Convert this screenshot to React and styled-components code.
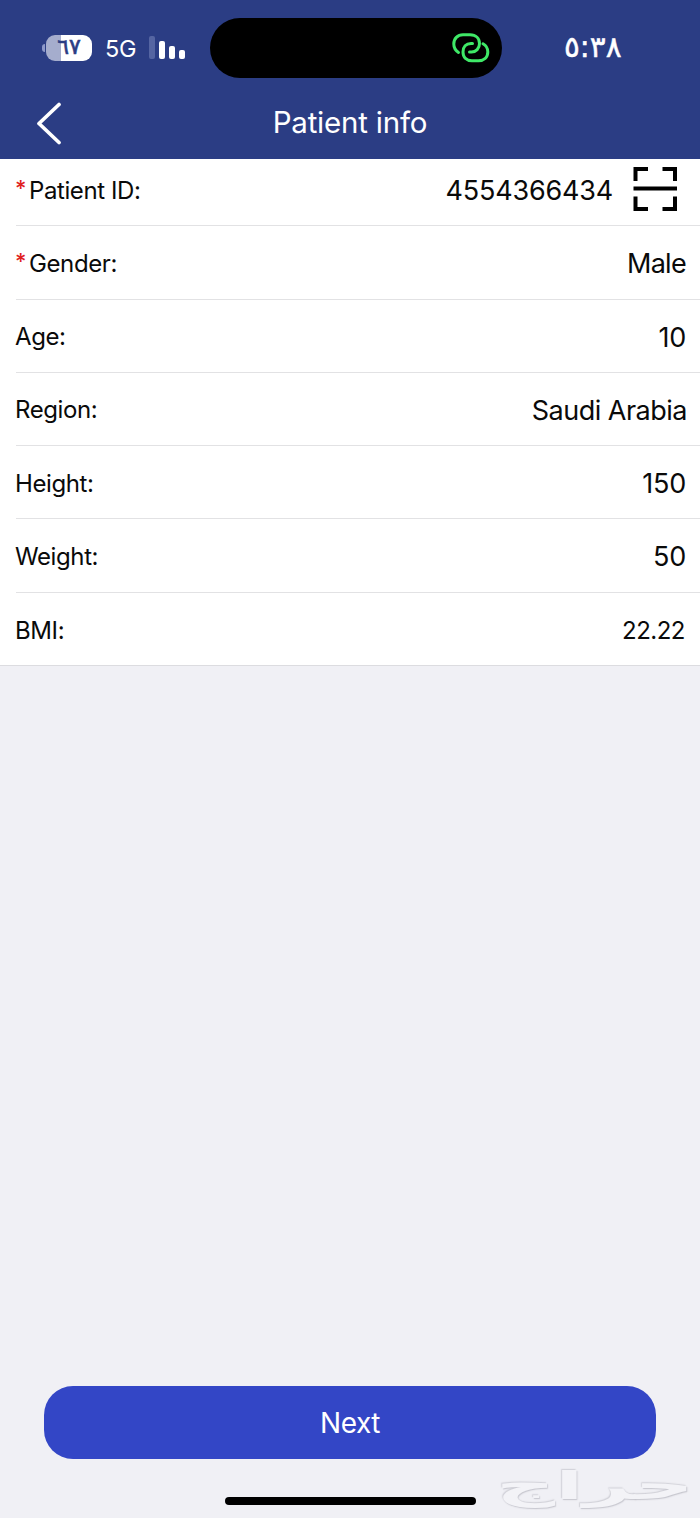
import React from "react";
import styled, { createGlobalStyle } from "styled-components";

const GlobalStyle = createGlobalStyle`
  body {
    margin: 0;
    background-color: #f0f0f5;
    font-family: Inter, "DejaVu Sans", sans-serif;
  }
`;

const Screen = styled.div`
  position: relative;
  display: flex;
  flex-direction: column;
  width: 700px;
  height: 1518px;
  overflow: hidden;
  background-color: #f0f0f5;
`;

const Header = styled.header`
  flex: none;
  z-index: 1;
  height: 159px;
  color: #fff;
  background-color: #2b3d84;
`;

const StatusBar = styled.div`
  display: grid;
  grid-template-columns: 210px 292px 1fr;
  align-items: center;
  height: 60px;
  padding-top: 18px;
`;

const Signals = styled.div`
  display: flex;
  align-items: center;
  height: 28px;
  padding-left: 42px;
`;

const BatteryCap = styled.span`
  width: 3px;
  height: 8px;
  margin-right: 1px;
  border-radius: 3px 0 0 3px;
  background-color: #8d98c9;
`;

const Battery = styled.span`
  display: flex;
  align-items: center;
  justify-content: center;
  width: 46px;
  height: 26px;
  padding-bottom: 3px;
  box-sizing: border-box;
  border-radius: 9px;
  color: #2b3d84;
  background: linear-gradient(to right, #a5adcd 33%, #fff 33%);
  font: 22px "DejaVu Sans", sans-serif;
  -webkit-text-stroke: 0.6px #2b3d84;
  letter-spacing: -1px;
  direction: ltr;
  unicode-bidi: bidi-override;
`;

const Network = styled.span`
  width: 44px;
  margin: 1px 0 0 13px;
  font-size: 23.5px;
  letter-spacing: -0.2px;
`;

const Bars = styled.span`
  display: flex;
  align-items: flex-end;
  gap: 4px;
  height: 23px;
  margin-bottom: 1px;
`;

const Bar = styled.i`
  width: 6px;
  height: ${(props) => props.$height}px;
  border-radius: 2px;
  background-color: ${(props) => (props.$dim ? "#5565a2" : "#fff")};
`;

const Island = styled.div`
  display: flex;
  align-items: center;
  justify-content: flex-end;
  height: 60px;
  padding-right: 12px;
  box-sizing: border-box;
  border-radius: 30px;
  background-color: #000;
`;

const Clock = styled.div`
  padding: 0 0 3px 62px;
  font: 29.5px "DejaVu Sans", sans-serif;
  -webkit-text-stroke: 0.5px #fff;
  letter-spacing: -0.2px;
  direction: ltr;
  unicode-bidi: bidi-override;
`;

const NavBar = styled.nav`
  display: grid;
  grid-template-columns: 100px 1fr 100px;
  align-items: center;
  height: 90px;
`;

const BackButton = styled.button`
  display: flex;
  padding: 0 0 0 36px;
  border: 0;
  background: none;
`;

const Title = styled.h1`
  margin: 0 0 2px;
  text-align: center;
  font-size: 29.5px;
  font-weight: 400;
  letter-spacing: -0.2px;
`;

// The list is scrolled slightly under the header
const List = styled.main`
  flex: none;
  height: 512px;
  margin-top: -6px;
  border-bottom: 1px solid #dcdce0;
  background-color: #fff;
`;

const Row = styled.div`
  display: flex;
  align-items: center;
  height: 73.25px;
  margin-left: 16px;
  padding: 2px ${(props) => props.$right || 14}px 0 0;
  box-sizing: border-box;
  border-bottom: 1px solid #e2e2e4;
  color: #0a0a0a;

  &:last-child {
    border-bottom: 0;
  }
`;

const Required = styled.span`
  width: 14px;
  margin: 0 0 4px -1px;
  color: #e02020;
  font-size: 22px;
  font-weight: 500;

  & + span {
    margin-left: 0;
  }
`;

const Label = styled.span`
  flex: 1;
  margin-left: -1px;
  font-size: 24px;
  letter-spacing: -0.4px;
`;

const Value = styled.span`
  padding-top: 1px;
  font-size: ${(props) => props.$size || 27}px;
  letter-spacing: ${(props) => props.$spacing || -0.2}px;
`;

const ScanButton = styled.button`
  display: flex;
  margin: 0 0 2px 20px;
  padding: 0;
  border: 0;
  background: none;
`;

const Footer = styled.footer`
  display: flex;
  flex-direction: column;
  align-items: center;
  margin-top: auto;
  padding-bottom: 13px;
`;

const NextButton = styled.button`
  width: 612px;
  height: 73px;
  margin-bottom: 38px;
  padding-top: 2px;
  border: 0;
  border-radius: 29px;
  color: #fff;
  background-color: #3346c6;
  font-family: inherit;
  font-size: 28px;
  letter-spacing: -0.5px;
`;

const HomeIndicator = styled.div`
  width: 251px;
  height: 8px;
  border-radius: 4px;
  background-color: #000;
`;

const Watermark = styled.div`
  position: absolute;
  right: 6px;
  bottom: 13px;
  color: #f3f3f7;
  font: bold 44px/44px "DejaVu Sans", sans-serif;
  direction: rtl;
  transform: scale(1.87, 0.87);
  transform-origin: right bottom;
  text-shadow: 0.5px 1px 1px #c4c4cc, -0.5px -1px 1px #d0d0d7;
`;

function LinkIcon() {
  return (
    <svg width="38" height="30" viewBox="0 0 38 30" fill="none" stroke="#3fe867" strokeWidth="3" strokeLinecap="round">
      <path d="M6.5 19.5C3.5 17.5 1.8 14.5 1.8 11C1.8 5.5 5.5 1.8 11 1.8H18C24 1.8 27.5 5.5 27.5 10.5C27.5 15.5 24 19 19.5 19H17.5" />
      <path d="M20.5 10.5H19C14 10.5 11 14 11 19C11 24.5 14.5 27.8 20 27.8H26.5C32 27.8 35.8 24.5 35.8 19C35.8 15.5 34 12.5 31 10.8" />
    </svg>
  );
}

function ScanIcon() {
  return (
    <svg width="45" height="44" viewBox="0 0 45 44" fill="none" stroke="#000" strokeWidth="4">
      <path d="M2.5 14V2H15M29.5 2H42V14M2.5 29.5V42H15M29.5 42H42V29.5M.5 21.5H44" />
    </svg>
  );
}

function BackIcon() {
  return (
    <svg width="26" height="44" viewBox="0 0 26 44" fill="none" stroke="#fff" strokeWidth="3.7" strokeLinecap="round" strokeLinejoin="round">
      <path d="M23 3.5L3 22.5L23 41.5" />
    </svg>
  );
}

function Field(props) {
  return (
    <Row $right={props.right}>
      {props.required && <Required>*</Required>}
      <Label>{props.label}</Label>
      <Value $size={props.size} $spacing={props.spacing}>
        {props.value}
      </Value>
      {props.children}
    </Row>
  );
}

function App() {
  return (
    <React.Fragment>
      <GlobalStyle />
      <Screen>
        <Header>
          <StatusBar>
            <Signals>
              <BatteryCap />
              <Battery>٦٧</Battery>
              <Network>5G</Network>
              <Bars>
                <Bar $height={23} $dim />
                <Bar $height={18} />
                <Bar $height={13} />
                <Bar $height={9} />
              </Bars>
            </Signals>
            <Island>
              <LinkIcon />
            </Island>
            <Clock>٥:٣٨</Clock>
          </StatusBar>
          <NavBar>
            <BackButton aria-label="Back">
              <BackIcon />
            </BackButton>
            <Title>Patient info</Title>
          </NavBar>
        </Header>

        <List>
          <Field required label="Patient ID:" value="4554366434" right={22}>
            <ScanButton aria-label="Scan">
              <ScanIcon />
            </ScanButton>
          </Field>
          <Field required label="Gender:" value="Male" spacing={-0.7} />
          <Field label="Age:" value="10" />
          <Field label="Region:" value="Saudi Arabia" spacing={-0.5} right={13} />
          <Field label="Height:" value="150" />
          <Field label="Weight:" value="50" />
          <Field label="BMI:" value="22.22" size={24} spacing={-0.5} right={15} />
        </List>

        <Footer>
          <NextButton>Next</NextButton>
          <HomeIndicator />
        </Footer>
        <Watermark>حراج</Watermark>
      </Screen>
    </React.Fragment>
  );
}

export default App;
